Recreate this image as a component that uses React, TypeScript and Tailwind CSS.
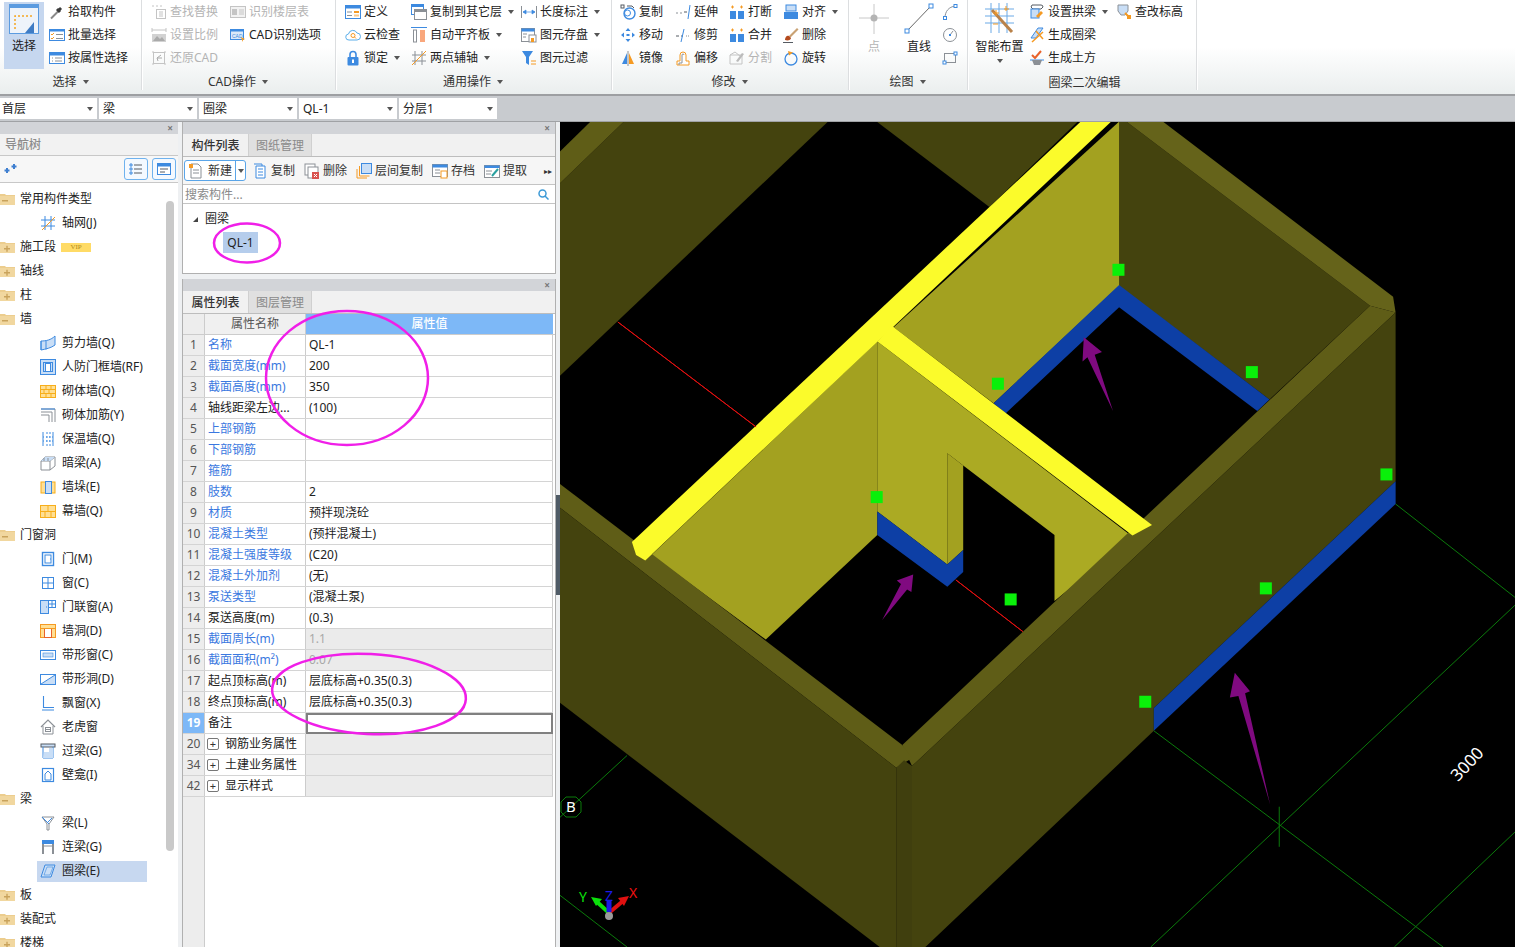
import React from 'react';

const B = '#3d8ae0', O = '#f59a23', G = '#8b9096', L = '#c9def6', D = '#555b62', LG = '#c4c4c4';

const Ic = ({ children, s = 16 }: { children: React.ReactNode; s?: number }) => (
  <svg width={s} height={s} viewBox="0 0 16 16" fill="none" className="shrink-0">{children}</svg>
);

const Caret = () => <span className="inline-block ml-[6px] w-0 h-0 border-x-[3px] border-x-transparent border-t-[4px] border-t-[#555]" />;

const icons: Record<string, React.ReactNode> = {
  pick: <><path d="M2 14.5 9 7.5" stroke="#8a8a8a" strokeWidth="2" /><path d="M8 5l3 3M10 4l2 2" stroke="#3a3a3a" strokeWidth="3" /></>,
  batch: <><rect x=".5" y="2.5" width="15" height="11" fill="#fff" stroke={B} /><rect x=".5" y="2.5" width="15" height="2" fill={B} /><path d="M2 7l1 1 2-2M2 11l1 1 2-2" stroke={O} /><path d="M7 7.5h7M7 11.5h7" stroke={G} /></>,
  attr: <><rect x=".5" y="2.5" width="15" height="11" fill="#fff" stroke={B} /><rect x=".5" y="2.5" width="15" height="3" fill={B} /><path d="M3 8h1M3 11h1M6 8h7M6 11h7" stroke={G} /></>,
  find: <><path d="M1 2h2M5 2h2M9 2h2" stroke={LG} /><rect x="5.5" y="5.5" width="9" height="9" stroke={LG} /><path d="M8 8h4M8 10h4M8 12h4" stroke={LG} /></>,
  floor: <><rect x=".5" y="2.5" width="15" height="11" stroke={LG} fill="#f2f2f2" /><rect x="2" y="5" width="5" height="6" fill={LG} /><path d="M9 6h5M9 8h5M9 10h5" stroke={LG} /></>,
  scale: <><path d="M1 3h14M1 1v4M15 1v4" stroke={LG} /><rect x="1" y="7" width="14" height="8" fill="#d2d2d2" /><path d="M2 14l4-5 3 3 2-2 3 4" fill="#aaa" /></>,
  cadopt: <><rect x=".5" y="2.5" width="13" height="10" fill="#dbe9f9" stroke={B} /><rect x=".5" y="2.5" width="13" height="2" fill={B} /><text x="2" y="10.5" fontSize="5" fill={B} fontFamily="Liberation Sans">CAD</text><path d="M11 10l4 2-2 1-.5 2z" fill={O} /></>,
  restore: <><rect x="2.5" y="2.5" width="11" height="11" stroke={LG} /><path d="M1 2h2M13 2h2M1 14h2M13 14h2" stroke={LG} /><path d="M10 5 6 8l1 3M6 8h5" stroke="#aaa" /></>,
  define: <><rect x=".5" y="1.5" width="15" height="13" fill="#fff" stroke={B} /><rect x=".5" y="1.5" width="15" height="3" fill={B} /><rect x="9" y="7" width="5" height="2" fill={O} /><rect x="9" y="10.5" width="5" height="2" fill="#f9c98a" /><path d="M2 8h5M2 11.5h5" stroke={G} /></>,
  cloud: <><path d="M4 13a3 3 0 0 1-.5-6 4.5 4.5 0 0 1 8.5-1 3.5 3.5 0 0 1 0 7z" stroke="#5aaeea" fill="#fff" /><circle cx="8" cy="8.5" r="2" stroke={O} /><path d="m9.5 10 1.5 1.5" stroke={O} /></>,
  lock: <><rect x="2.5" y="7" width="11" height="8.5" rx="1" fill={B} /><path d="M5 7V4.5a3 3 0 0 1 6 0V7" stroke={B} strokeWidth="1.6" /><rect x="7" y="9.5" width="2" height="3.5" fill="#fff" /></>,
  copyto: <><rect x=".5" y=".5" width="12" height="10" fill="#fff" stroke={B} /><rect x=".5" y=".5" width="12" height="2.5" fill={B} /><rect x="3.5" y="5.5" width="12" height="10" fill="#fff" stroke={G} /><rect x="3.5" y="5.5" width="12" height="2.5" fill={G} /></>,
  align: <><path d="M0 .5h16" stroke={B} /><rect x="2.5" y="3" width="3" height="12" fill="#fff" stroke={G} /><rect x="9" y="3" width="5" height="12" fill="#f9a77c" /></>,
  axis: <><path d="M4 1v14M11 1v14M1 5h14M1 11h14" stroke={G} /><path d="M1 15 15 1" stroke={O} /></>,
  len: <><path d="M.5 2v12M15.5 2v12" stroke={G} /><path d="M2 8h12M2 8l3-2v4zM14 8l-3-2v4z" stroke={B} fill={B} strokeWidth=".7" /></>,
  save: <><rect x=".5" y="1.5" width="13" height="13" fill="#fff" stroke={G} /><rect x=".5" y="1.5" width="13" height="3" fill={B} /><path d="M2 7h4M2 10h3" stroke={G} /><rect x="8" y="8" width="7" height="7" fill="#fff" stroke={G} /><rect x="10" y="11" width="3" height="4" fill={O} /></>,
  filter: <><path d="M1 1h11L8 7v8L5 13V7z" fill={B} /><path d="M10 11h5M10 14h5" stroke={O} /></>,
  copy: <><circle cx="9.5" cy="9.5" r="5.5" stroke={B} strokeWidth="1.4" /><circle cx="7.5" cy="9" r="3" stroke={B} /><rect x="1" y="1" width="3" height="3" stroke={D} /><path d="M7 2h5l2 2" stroke={D} /></>,
  move: <path d="M8 1 5.5 4h5zM8 15l-2.5-3h5zM1 8l3-2.5v5zM15 8l-3-2.5v5zM6.5 7h3v2h-3z" fill={B} />,
  mirror: <><path d="M8 1v15" stroke={G} /><path d="M7 3v11H2z" fill={B} /><path d="M9 3v11h5z" fill={O} /></>,
  extend: <><path d="M1 9h2M5 9h2" stroke={G} /><path d="M9 8h3" stroke={D} /><path d="M15 1l-2 14" stroke={B} /></>,
  trim: <><path d="M1 9h3M6 9h2" stroke={D} /><path d="M11 9h4" stroke={G} strokeDasharray="1 1" /><path d="M9 2 6 15" stroke={B} /></>,
  offset: <><path d="M2 15v-4h3V5a3 3 0 0 1 6 0v6h3v4z" fill="#fff" stroke={O} /><path d="M4 15v-2h3V5a1 1 0 0 1 2 0" stroke={G} /></>,
  brk: <><rect x="1" y="7" width="6" height="8" fill={B} /><rect x="9" y="7" width="6" height="8" fill={B} /><path d="M2 3h3M3.5 1.5v3M11 3h3M12.5 1.5v3" stroke={O} /></>,
  split: <><path d="M1 14h12L13 5 1 5z" stroke={LG} /><path d="M1 5l5-3 5 4" stroke={LG} /><path d="m7 11 6-8 2 1-6 8z" fill="#bbb" /></>,
  alignb: <><rect x="3" y="1" width="10" height="6" fill={L} stroke={B} /><rect x="1" y="8" width="14" height="7" fill={B} /></>,
  del: <><path d="m6 9 8-8 1.5 1.5-8 8z" fill="#c9a274" /><path d="M2 13c0-3 2-5 4-4l2 2c0 2-3 3-6 2z" fill="#b44a1e" /><path d="M0 15.5h10" stroke={D} /></>,
  rotate: <><circle cx="8" cy="9" r="6" stroke={B} strokeWidth="1.3" /><path d="M5 1l5 1.5-4 3z" fill={O} /></>,
  arc: <><path d="M3 14C3 7 7 3 13 2" stroke={G} /><rect x="1.5" y="12.5" width="3" height="3" fill="#fff" stroke={B} /><rect x="12" y=".5" width="3" height="3" fill="#fff" stroke={B} /></>,
  circ: <><circle cx="8" cy="8" r="6.5" stroke={G} /><path d="M8 8l3-4" stroke={G} /><rect x="7" y="7" width="2" height="2" fill={B} /></>,
  rc: <><rect x="2.5" y="3.5" width="11" height="9" stroke={G} /><rect x="1" y="11" width="3" height="3" fill="#fff" stroke={B} /><rect x="12" y="2" width="3" height="3" fill="#fff" stroke={B} /></>,
  arch: <><path d="M3 1h9a2 2 0 0 1 2 2L12 5H4L2 3z" fill="#fff" stroke={D} /><rect x="2" y="5" width="8" height="9" fill={L} stroke={B} /><path d="m7 12 5-5 2 2-5 5z" fill={O} /></>,
  ring: <><path d="M2 11 9 1h5l-7 10z" fill={L} stroke={B} /><path d="M3 15 14 5M7 4l7 8" stroke={O} strokeWidth="1.5" /></>,
  earth: <><path d="m3 5 3 3 6-7" stroke="#e8622a" strokeWidth="2" /><path d="M1 10h14" stroke={B} /><path d="M3 10h10l-2 5H5z" fill={G} /></>,
  check: <><path d="M2 1h10v6l-3 4H5L2 7z" fill={L} stroke={G} /><path d="m9 9 5 5" stroke={O} strokeWidth="2" /><rect x="11" y="11" width="4" height="4" fill={O} /></>,
  nw: <><path d="M3 1h7l3 3v11H3z" fill="#fff" stroke={G} /><path d="M1 1h4v4H1z" fill={O} /><path d="M5 7h6M5 10h6" stroke={G} /></>,
  cp: <><path d="M4 3h9v12H4z" fill="#fff" stroke={B} /><path d="M2 1h8v2M6 6h5M6 9h5M6 12h5" stroke={B} /></>,
  dl: <><rect x="1" y="1" width="10" height="11" fill="#fff" stroke={G} /><rect x="4" y="4" width="10" height="11" fill="#fff" stroke={G} /><rect x="8" y="9" width="7" height="7" fill="#d9534f" /><path d="m10 11 3 3m0-3-3 3" stroke="#fff" /></>,
  fl: <><rect x="5.5" y=".5" width="10" height="10" fill={L} stroke={B} /><path d="M3.5 3v10h10M1 6v9h10" stroke={O} /></>,
  ar: <><rect x=".5" y="1.5" width="15" height="12" fill="#fff" stroke={G} /><rect x=".5" y="1.5" width="15" height="3" fill={B} /><path d="M3 7h5M3 10h5" stroke={G} /><rect x="9" y="8" width="6" height="7" fill="#fff" stroke={O} /></>,
  ex: <><rect x=".5" y="2.5" width="15" height="12" fill="#fff" stroke={G} /><rect x=".5" y="2.5" width="15" height="2.5" fill={B} /><path d="M2 8h6M2 11h5" stroke={G} /><path d="m8 13 6-7" stroke="#2aa0a0" strokeWidth="2" /></>,
  grid: <><path d="M5 1v14M11 1v14M1 5h14M1 11h14" stroke={B} /><path d="M2 15 15 2" stroke={O} /></>,
  shear: <><path d="M1 6c5 0 10-1 14-5v9c-4 3-9 4-14 5z" fill={L} stroke={B} /><path d="M1 6v9M6 5.500v9" stroke={B} /></>,
  rf: <><rect x=".5" y=".5" width="15" height="15" fill={L} stroke={B} /><rect x="3.500" y="3.500" width="9" height="9" stroke={B} /><rect x="5.500" y="4.500" width="5" height="8" fill="#fff" stroke={B} /></>,
  brick: <><rect x=".5" y="2.500" width="15" height="12" fill="#ffdf94" stroke="#f7ae1a" /><path d="M1 6.500h14M1 10.500h14M6 3v3M11 3v3M4 7v4M9 7v4M6 11v3M11 11v3" stroke="#f7ae1a" /></>,
  reinf: <><path d="M1 2h14v13M1 5h11v10M1 8h8v7" stroke={G} /><path d="M1 2h14" stroke={B} /></>,
  ins: <><path d="M3 1v14M13 1v14" stroke={B} /><path d="M7 1v14M10 1v14" stroke={B} strokeDasharray="2 2" /><path d="M3 6h10M3 10h10" stroke={B} strokeDasharray="1 2" /></>,
  hidden: <><path d="M1 6h9v9H1zM1 6l4-4h10L10 6M15 2v9l-5 4" stroke={G} /><path d="M5 2 1 6h9l5-4z" fill={L} /><path d="M4 3v3M8 3v3" stroke={G} /></>,
  pier: <><rect x="1" y="3" width="14" height="11" fill="#ffdf94" stroke="#f7ae1a" /><rect x="5.500" y="2.500" width="6" height="12" fill={L} stroke={B} /></>,
  curtain: <><rect x=".5" y="2.500" width="15" height="12" fill="#ffdf94" stroke="#f7ae1a" /><path d="M1 8.500h14M8 3v5M5 9v5M11 9v5" stroke="#f7ae1a" /></>,
  door: <><rect x="2.500" y="1.500" width="11" height="13" fill="#fff" stroke={B} strokeWidth="1.400" /><rect x="5" y="4" width="6" height="8" stroke={B} /><path d="M10 8h1" stroke={B} /></>,
  win: <><rect x="2.500" y="2.500" width="11" height="11" fill="#fff" stroke={B} /><path d="M8 3v10M3 8h10" stroke={B} /></>,
  dw: <><rect x=".5" y="1.500" width="8" height="13" fill={L} stroke={B} /><rect x="8.500" y="1.500" width="7" height="7" fill="#fff" stroke={B} /><path d="M12 2v6M9 5h6M6 8h1" stroke={B} /></>,
  hole: <><rect x=".5" y="1.500" width="15" height="13" fill="#ffdf94" stroke={O} /><rect x="4.500" y="5.500" width="7" height="9" fill="#fff" stroke="#e8622a" /><path d="M1 5.500h14" stroke={O} /></>,
  strip: <><rect x=".5" y="3.500" width="15" height="9" fill="#fff" stroke={B} /><rect x="3" y="6" width="10" height="4" fill={L} stroke={B} strokeWidth=".6" /></>,
  striph: <><rect x=".5" y="3.500" width="15" height="10" fill="#fff" stroke={B} /><path d="M1 13 15 4v9z" fill={L} /><path d="M1 13 15 4" stroke={B} /></>,
  bay: <path d="M3.500 1v11.500H14M2 15h12" stroke={B} strokeWidth="1.100" />,
  dormer: <><path d="M1 8 8 1l7 7" stroke={G} strokeWidth="1.200" /><path d="M3 7v8h10V7" stroke={G} /><rect x="5.500" y="8.500" width="5" height="4" stroke={G} /><path d="M6 10.500h4" stroke={G} /></>,
  lintel: <><rect x="1" y="1" width="14" height="3" fill={L} stroke={D} /><path d="M3 4v11h10V4" stroke={B} /><path d="M3 15 4 9h5V5h4v10z" fill={L} /></>,
  niche: <><rect x="2.500" y="1.500" width="11" height="13" fill="#fff" stroke={B} strokeWidth="1.200" /><path d="M5 13V7l3-3 3 3v6z" stroke={B} /></>,
  beam: <><path d="M2 2h12L9 9v6H7V9z" fill="#fff" stroke={G} /><path d="m2 2 7 7M7 8l5-5" stroke={B} /></>,
  link: <><rect x="2" y="1" width="12" height="4" fill={B} /><path d="M3 5v10M13 5v10" stroke={G} strokeWidth="2" /><path d="M2 7h12" stroke={G} /></>,
  quan: <><path d="M1 14 5 2h10l-4 12z" fill={L} stroke={B} /><path d="M4 12 7 4h6l-3 8z" stroke={B} strokeWidth=".6" /></>,
};

function Tool({ i, t, caret, off, w }: { i: string; t: string; caret?: boolean; off?: boolean; w: string }) {
  return (
    <div className={`h-[23px] flex items-center ${w}`}>
      <Ic>{icons[i]}</Ic>
      <span className={`ml-[3px] text-[12px] leading-[16px] whitespace-nowrap ${off ? 'text-[#b4b4b4]' : 'text-[#222]'}`}>{t}</span>
      {caret && <Caret />}
    </div>
  );
}

function Group({ w, label, caret = true, pl, lp = '', children }: { w: string; label: string; caret?: boolean; pl: string; lp?: string; children: React.ReactNode }) {
  return (
    <div className={`${w} h-[94px] shrink-0 flex flex-col relative`}>
      <div className={`h-[71px] flex ${pl}`}>{children}</div>
      <div className={`h-[21px] flex items-center justify-center text-[12px] text-[#333] ${lp}`}>
        {label}{caret && <Caret />}
      </div>
      <div className="absolute right-[-2px] top-0 h-[90px] w-[2px] bg-[#dcdee0] border-r border-white" />
    </div>
  );
}

function Ribbon() {
  return (
    <div className="h-[94px] flex bg-gradient-to-b from-white from-50% to-[#eaeeee]">
      <Group w="w-[141px]" label="选择" pl="pl-[4px]">
        <div className="w-[40px] h-[67px] mt-[2px] bg-[#c6d7ef] flex flex-col items-center shrink-0">
          <svg width="30" height="30" viewBox="0 0 30 30" fill="none" className="mt-[2px]">
            <rect x=".5" y=".5" width="29" height="29" fill="#eef3fa" stroke="#5b9be0" />
            <rect x="0" y="0" width="30" height="4" fill="#5b9be0" />
            <path d="M6 25V12h18" stroke="#f5a623" strokeWidth="1.500" strokeDasharray="2 2" />
            <path d="M25 18v11H16z" fill="#3f7cc4" />
          </svg>
          <span className="text-[12px] leading-[16px] mt-[4px] text-[#222]">选择</span>
        </div>
        <div className="ml-[5px] flex flex-col">
          <Tool i="pick" t="拾取构件" w="w-[90px]" />
          <Tool i="batch" t="批量选择" w="w-[90px]" />
          <Tool i="attr" t="按属性选择" w="w-[90px]" />
        </div>
      </Group>
      <Group w="w-[194px]" label="CAD操作" pl="pl-[10px]">
        <div className="w-[79px] flex flex-col">
          <Tool i="find" t="查找替换" off w="w-[79px]" />
          <Tool i="scale" t="设置比例" off w="w-[79px]" />
          <Tool i="restore" t="还原CAD" off w="w-[79px]" />
        </div>
        <div className="flex flex-col">
          <Tool i="floor" t="识别楼层表" off w="w-[100px]" />
          <Tool i="cadopt" t="CAD识别选项" w="w-[100px]" />
        </div>
      </Group>
      <Group w="w-[276px]" label="通用操作" pl="pl-[10px]">
        <div className="w-[66px] flex flex-col">
          <Tool i="define" t="定义" w="w-[66px]" />
          <Tool i="cloud" t="云检查" w="w-[66px]" />
          <Tool i="lock" t="锁定" caret w="w-[66px]" />
        </div>
        <div className="w-[110px] flex flex-col">
          <Tool i="copyto" t="复制到其它层" caret w="w-[110px]" />
          <Tool i="align" t="自动平齐板" caret w="w-[110px]" />
          <Tool i="axis" t="两点辅轴" caret w="w-[110px]" />
        </div>
        <div className="flex flex-col">
          <Tool i="len" t="长度标注" caret w="w-[88px]" />
          <Tool i="save" t="图元存盘" caret w="w-[88px]" />
          <Tool i="filter" t="图元过滤" w="w-[88px]" />
        </div>
      </Group>
      <Group w="w-[237px]" label="修改" pl="pl-[9px]">
        <div className="w-[55px] flex flex-col">
          <Tool i="copy" t="复制" w="w-[55px]" />
          <Tool i="move" t="移动" w="w-[55px]" />
          <Tool i="mirror" t="镜像" w="w-[55px]" />
        </div>
        <div className="w-[54px] flex flex-col">
          <Tool i="extend" t="延伸" w="w-[54px]" />
          <Tool i="trim" t="修剪" w="w-[54px]" />
          <Tool i="offset" t="偏移" w="w-[54px]" />
        </div>
        <div className="w-[54px] flex flex-col">
          <Tool i="brk" t="打断" w="w-[54px]" />
          <Tool i="brk" t="合并" w="w-[54px]" />
          <Tool i="split" t="分割" off w="w-[54px]" />
        </div>
        <div className="flex flex-col">
          <Tool i="alignb" t="对齐" caret w="w-[60px]" />
          <Tool i="del" t="删除" w="w-[60px]" />
          <Tool i="rotate" t="旋转" w="w-[60px]" />
        </div>
      </Group>
      <Group w="w-[119px]" label="绘图" pl="pl-[11px]">
        <div className="w-[30px] flex flex-col items-center">
          <svg width="30" height="32" viewBox="0 0 30 32" className="mt-[2px]">
            <path d="M15 2v30M0 16h30" stroke="#c8c8c8" />
            <circle cx="15" cy="16" r="3.500" fill="#b4b4b4" />
          </svg>
          <span className="text-[12px] leading-[16px] mt-[5px] text-[#b4b4b4]">点</span>
        </div>
        <div className="ml-[12px] w-[36px] flex flex-col items-center">
          <svg width="30" height="32" viewBox="0 0 30 32" fill="none" className="mt-[2px]">
            <path d="M3 29 27 4" stroke="#666" />
            <rect x="1" y="27" width="4" height="4" fill="#fff" stroke={B} />
            <rect x="25" y="2" width="4" height="4" fill="#fff" stroke={B} />
          </svg>
          <span className="text-[12px] leading-[16px] mt-[5px] text-[#222]">直线</span>
        </div>
        <div className="ml-[5px] flex flex-col">
          <div className="h-[23px] flex items-center"><Ic>{icons.arc}</Ic></div>
          <div className="h-[23px] flex items-center"><Ic>{icons.circ}</Ic></div>
          <div className="h-[23px] flex items-center"><Ic>{icons.rc}</Ic></div>
        </div>
      </Group>
      <Group w="w-[229px]" label="圈梁二次编辑" caret={false} pl="pl-[8px]" lp="pl-[6px] pt-[3px]">
        <div className="w-[49px] flex flex-col items-center shrink-0">
          <svg width="32" height="34" viewBox="0 0 32 34" fill="none">
            <path d="M7 3v30M15 3v30M23 3v30M1 9h29M1 16h29M1 23h29" stroke="#6aa9e6" />
            <path d="M8 10l20 22" stroke="#b9824a" strokeWidth="3" />
            <path d="M9 13h6M12 10v6M20 9h5M22 6v5M9 24h5" stroke={O} />
          </svg>
          <span className="text-[12px] leading-[16px] mt-[5px] whitespace-nowrap text-[#222]">智能布置</span>
          <span className="mt-[4px] w-0 h-0 border-x-[3px] border-x-transparent border-t-[4px] border-t-[#555]" />
        </div>
        <div className="ml-[5px] w-[87px] flex flex-col">
          <Tool i="arch" t="设置拱梁" caret w="w-[87px]" />
          <Tool i="ring" t="生成圈梁" w="w-[87px]" />
          <Tool i="earth" t="生成土方" w="w-[87px]" />
        </div>
        <div className="flex flex-col">
          <Tool i="check" t="查改标高" w="w-[70px]" />
        </div>
      </Group>
    </div>
  );
}

const selects = ['首层', '梁', '圈梁', 'QL-1', '分层1'];

function Selects() {
  return (
    <div className="h-[27px] bg-[#c8cbcf] border-t-2 border-[#9d9fa2] flex items-start gap-[2px] pt-[2px]">
      {selects.map((s, i) => (
        <div key={s} className={`h-[21px] bg-white flex items-center justify-between pr-[4px] text-[12px] text-[#222] ${i === 0 ? 'w-[97px] pl-[2px]' : 'w-[98px] pl-[4px]'}`}>
          <span>{s}</span>
          <span className="w-0 h-0 border-x-[3px] border-x-transparent border-t-[4px] border-t-[#555]" />
        </div>
      ))}
    </div>
  );
}

const Title = () => (
  <div className="h-[12px] bg-[#d2d4d8] flex items-center justify-end pr-[5px] text-[10px] leading-[10px] text-[#777] font-bold shrink-0">×</div>
);

type TreeItem = [string, string];
const tree: TreeItem[] = [
  ['-', '常用构件类型'], ['grid', '轴网(J)'], ['+', '施工段'], ['+', '轴线'], ['+', '柱'], ['-', '墙'],
  ['shear', '剪力墙(Q)'], ['rf', '人防门框墙(RF)'], ['brick', '砌体墙(Q)'], ['reinf', '砌体加筋(Y)'], ['ins', '保温墙(Q)'],
  ['hidden', '暗梁(A)'], ['pier', '墙垛(E)'], ['curtain', '幕墙(Q)'], ['-', '门窗洞'], ['door', '门(M)'], ['win', '窗(C)'],
  ['dw', '门联窗(A)'], ['hole', '墙洞(D)'], ['strip', '带形窗(C)'], ['striph', '带形洞(D)'], ['bay', '飘窗(X)'],
  ['dormer', '老虎窗'], ['lintel', '过梁(G)'], ['niche', '壁龛(I)'], ['-', '梁'], ['beam', '梁(L)'], ['link', '连梁(G)'],
  ['quan', '圈梁(E)'], ['+', '板'], ['+', '装配式'], ['+', '楼梯'],
];

function Folder({ open }: { open: boolean }) {
  return (
    <svg width="15" height="14" viewBox="0 0 15 14" className="shrink-0">
      <path d="M0 3V2h5l1 1h9v10H0z" fill="#eccd8e" />
      <path d="M0 4h15v9H0z" fill="#f1d79f" />
      <path d={open ? 'M2 8h6v1.500H2z' : 'M4 8h6v1.500H4zM6.300 5.800h1.400v6H6.300z'} fill="#c9a35c" />
    </svg>
  );
}

function Nav() {
  return (
    <div className="w-[178px] h-full bg-white flex flex-col shrink-0 relative overflow-hidden">
      <Title />
      <div className="h-[22px] bg-[#f2f2f2] flex items-center pl-[5px] pt-px text-[12px] text-[#8c8c8c] font-medium border-b border-[#c8c8c8] shrink-0">导航树</div>
      <div className="h-[27px] bg-[#f7f7f7] border-b border-[#c8c8c8] flex items-center justify-between pl-[4px] pr-[2px] shrink-0">
        <svg width="14" height="12" viewBox="0 0 14 12"><path d="M3 5v5M.5 7.500h5M10 1v5M7.500 3.500h5" stroke="#3f7fd0" strokeWidth="2" /></svg>
        <div className="flex gap-[4px]">
          <div className="w-[24px] h-[22px] border border-[#6fb2ee] rounded-[3px] bg-[#f4f9ff] flex items-center justify-center">
            <Ic><path d="M2 3h2v2H2zM2 7h2v2H2zM2 11h2v2H2z" stroke={B} /><path d="M6 4h8M6 8h8M6 12h8" stroke={D} /></Ic>
          </div>
          <div className="w-[24px] h-[22px] border border-[#6fb2ee] rounded-[3px] bg-[#f4f9ff] flex items-center justify-center">
            <Ic><rect x="1.500" y="2.500" width="13" height="11" fill="#fff" stroke={B} /><rect x="1.500" y="2.500" width="13" height="3" fill={B} /><path d="M4 8h8M4 11h5" stroke={D} /></Ic>
          </div>
        </div>
      </div>
      <div className="pt-[4px] flex flex-col">
        {tree.map(([k, t]) => {
          const isFolder = k === '+' || k === '-';
          const sel = t === '圈梁(E)';
          return (
            <div key={t} className="h-[24px] flex items-center text-[12px] text-[#222] whitespace-nowrap shrink-0">
              {isFolder ? (
                <>
                  <Folder open={k === '-'} />
                  <span className="ml-[5px]">{t}</span>
                  {t === '施工段' && <span className="ml-[5px] w-[30px] h-[9px] bg-[#ffdb66] text-[#b08a1e] text-[7px] leading-[9px] text-center font-['Liberation_Serif']">VIP</span>}
                </>
              ) : (
                <div className={`ml-[37px] w-[110px] h-[21px] pl-[3px] flex items-center ${sel ? 'bg-[#c7d8f0]' : ''}`}>
                  <Ic>{icons[k]}</Ic>
                  <span className="ml-[6px]">{t}</span>
                </div>
              )}
            </div>
          );
        })}
      </div>
      <div className="absolute left-[166px] top-[79px] w-[8px] h-[650px] rounded-[4px] bg-[#c9c9c9]" />
    </div>
  );
}

function Tabs({ a, b }: { a: string; b: string }) {
  return (
    <div className="h-[23px] bg-[#f1f1f1] flex border-b border-[#bdbdbd] shrink-0 text-[12px]">
      <div className="w-[65px] flex items-center justify-center pt-px font-medium text-[#333] bg-[#f1f1f1]">{a}</div>
      <div className="w-[64px] flex items-center justify-center pt-px text-[#8a8a8a] bg-[#e0e0e0] border-x border-[#d0d0d0]">{b}</div>
    </div>
  );
}

function TB({ i, t, w }: { i: string; t: string; w: string }) {
  return (
    <div className={`flex items-center ${w} shrink-0`}>
      <Ic>{icons[i]}</Ic>
      <span className="ml-[3px] text-[12px] text-[#333] whitespace-nowrap">{t}</span>
    </div>
  );
}

type Row = { n: number; k: string; v?: string; link?: boolean; gray?: boolean; sel?: boolean; plus?: boolean };
const rows: Row[] = [
  { n: 1, k: '名称', v: 'QL-1', link: true }, { n: 2, k: '截面宽度(mm)', v: '200', link: true }, { n: 3, k: '截面高度(mm)', v: '350', link: true },
  { n: 4, k: '轴线距梁左边...', v: '(100)' }, { n: 5, k: '上部钢筋', link: true }, { n: 6, k: '下部钢筋', link: true }, { n: 7, k: '箍筋', link: true },
  { n: 8, k: '肢数', v: '2', link: true }, { n: 9, k: '材质', v: '预拌现浇砼', link: true }, { n: 10, k: '混凝土类型', v: '(预拌混凝土)', link: true },
  { n: 11, k: '混凝土强度等级', v: '(C20)', link: true }, { n: 12, k: '混凝土外加剂', v: '(无)', link: true }, { n: 13, k: '泵送类型', v: '(混凝土泵)', link: true },
  { n: 14, k: '泵送高度(m)', v: '(0.3)' }, { n: 15, k: '截面周长(m)', v: '1.1', link: true, gray: true }, { n: 16, k: '截面面积(m²)', v: '0.07', link: true, gray: true },
  { n: 17, k: '起点顶标高(m)', v: '层底标高+0.35(0.3)' }, { n: 18, k: '终点顶标高(m)', v: '层底标高+0.35(0.3)' }, { n: 19, k: '备注', sel: true },
  { n: 20, k: '钢筋业务属性', plus: true, gray: true }, { n: 34, k: '土建业务属性', plus: true, gray: true }, { n: 42, k: '显示样式', plus: true, gray: true },
];

function Table() {
  return (
    <div className="flex-1 flex flex-col text-[12px] bg-white relative min-h-0">
      <div className="h-[21px] flex shrink-0 border-b border-[#ccc]">
        <div className="w-[22px] bg-[#ededed] border-r border-[#ccc]" />
        <div className="w-[101px] bg-[#f0f0f0] border-r border-[#ccc] flex items-center justify-center text-[#555]">属性名称</div>
        <div className="w-[247px] bg-[#7db8f7] flex items-center justify-center text-white font-medium">属性值</div>
      </div>
      {rows.map(r => (
        <div key={r.n} className="h-[21px] flex shrink-0 border-b border-[#d4d4d4] w-[370px]">
          <div className={`w-[22px] border-r border-[#ccc] flex items-center justify-center ${r.sel ? 'bg-[#7db8f7] text-white font-bold' : 'bg-[#ededed] text-[#555]'}`}>{r.n}</div>
          <div className={`w-[101px] border-r border-[#ccc] flex items-center pl-[3px] whitespace-nowrap overflow-hidden ${r.link ? 'text-[#3a78e0]' : 'text-[#222]'}`}>
            {r.plus && <span className="w-[12px] h-[12px] border border-[#777] rounded-[2px] flex items-center justify-center text-[11px] leading-[10px] mr-[6px] ml-[-1px] text-[#333]">+</span>}
            {r.k}
          </div>
          <div className={`w-[247px] flex items-center pl-[3px] ${r.sel ? 'border-2 border-[#808080] h-[21px]' : 'border-r border-[#ccc]'} ${r.gray ? 'bg-[#ebebeb] text-[#a8a8a8]' : 'text-[#222]'}`}>{r.v}</div>
        </div>
      ))}
      <div className="absolute left-0 top-[483px] bottom-0 w-[22px] bg-[#ededed] border-r border-[#ccc]" />
    </div>
  );
}

function Middle() {
  return (
    <div className="w-[374px] ml-[4px] h-full flex flex-col shrink-0">
      <div className="h-[152px] flex flex-col border-x border-b border-[#b0b0b0] shrink-0">
        <Title />
        <Tabs a="构件列表" b="图纸管理" />
        <div className="h-[28px] bg-[#f6f6f6] border-b border-[#c4c4c4] flex items-center pl-[1px] shrink-0">
          <div className="w-[62px] h-[21px] bg-white border border-[#5aa5e8] rounded-[3px] flex items-center pl-[3px] text-[12px] text-[#333] shrink-0">
            <Ic>{icons.nw}</Ic>
            <span className="ml-[4px]">新建</span>
            <span className="ml-[3px] h-full border-l border-[#5aa5e8] pl-[2px] flex items-center"><span className="w-0 h-0 border-x-[3px] border-x-transparent border-t-[4px] border-t-[#555]" /></span>
          </div>
          <div className="ml-[6px] flex">
            <TB i="cp" t="复制" w="w-[52px]" />
            <TB i="dl" t="删除" w="w-[52px]" />
            <TB i="fl" t="层间复制" w="w-[76px]" />
            <TB i="ar" t="存档" w="w-[52px]" />
            <TB i="ex" t="提取" w="w-[60px]" />
          </div>
          <span className="text-[8px] text-[#333]">▸▸</span>
        </div>
        <div className="h-[19px] bg-white border-b border-[#c4c4c4] flex items-center justify-between pl-[2px] pr-[6px] pt-px text-[12px] text-[#8a8a8a] shrink-0">
          <span>搜索构件...</span>
          <svg width="11" height="11" viewBox="0 0 11 11" fill="none"><circle cx="4.500" cy="4.500" r="3.500" stroke="#3d9ad6" strokeWidth="1.500" /><path d="m7 7 3.500 3.500" stroke="#3d9ad6" strokeWidth="1.500" /></svg>
        </div>
        <div className="flex-1 bg-white text-[12px] text-[#222] pl-[10px] pt-[6px]">
          <div className="h-[18px] flex items-center">
            <span className="w-0 h-0 border-l-[5px] border-l-transparent border-b-[5px] border-b-[#444]" />
            <span className="ml-[7px]">圈梁</span>
          </div>
          <div className="ml-[30px] mt-[4px] w-[35px] h-[21px] bg-[#b5cdec] flex items-center justify-center">QL-1</div>
        </div>
      </div>
      <div className="mt-[5px] flex-1 flex flex-col border-x border-[#b0b0b0] min-h-0">
        <Title />
        <Tabs a="属性列表" b="图层管理" />
        <Table />
      </div>
    </div>
  );
}

const m = (pts: number[][]) => pts.map(([x, y]) => `${(x / 1.642).toFixed(1)},${(y / 1.896 - 2).toFixed(1)}`).join(' ');
const px = (x: number) => x / 1.642;
const py = (y: number) => y / 1.896 - 2;

const polys: [string, number[][]][] = [
  ['#44430e', [[0, 120], [105, 3], [440, 3], [0, 485]]],
  ['#5f5d17', [[0, 60], [50, 3], [105, 3], [0, 120]]],
  ['#44430e', [[520, 3], [850, 3], [705, 165]]],
  ['#44430e', [[918, 3], [930, 3], [1330, 352], [1165, 530], [918, 315]]],
  ['#65631a', [[930, 3], [990, 3], [1368, 335], [1372, 365], [1330, 352]]],
  ['#a3a120', [[548, 393], [918, 3], [918, 315], [712, 537]]],
  ['#a3a120', [[150, 825], [521, 420], [521, 787], [338, 985]]],
  ['#abaa23', [[521, 420], [940, 790], [812, 912], [812, 787], [662, 655], [636, 632], [636, 843], [521, 742]]],
  ['#a3a120', [[636, 632], [662, 655], [662, 815], [636, 843]]],
  ['#0d3fa5', [[521, 742], [636, 843], [662, 815], [662, 857], [636, 885], [521, 787]]],
  ['#0d3fa5', [[712, 537], [918, 313], [1165, 530], [1145, 552], [918, 355], [732, 556]]],
  ['#5f5d17', [[1330, 352], [1372, 365], [578, 1225], [562, 1185]]],
  ['#5f5d17', [[0, 690], [562, 1185], [578, 1210], [552, 1228], [0, 735]]],
  ['#44430e', [[0, 735], [552, 1228], [552, 1568], [525, 1568], [0, 1105]]],
  ['#403f0e', [[552, 1228], [565, 1214], [578, 1225], [578, 1568], [552, 1568]]],
  ['#44430e', [[578, 1225], [1372, 365], [1372, 685], [975, 1115], [975, 1158], [600, 1568], [578, 1568]]],
  ['#0d3fa5', [[975, 1115], [1372, 685], [1372, 728], [975, 1158]]],
  ['#fbfb2b', [[118, 800], [855, 3], [905, 3], [140, 835], [125, 825]]],
  ['#fbfb2b', [[545, 390], [972, 768], [940, 788], [521, 420]]],
  ['#800a80', [[908, 552], [866, 450], [858, 458], [860, 412], [890, 440], [878, 445]]],
  ['#800a80', [[529, 948], [560, 880], [553, 873], [580, 862], [577, 895], [570, 890]]],
  ['#800a80', [[1166, 1298], [1114, 1092], [1100, 1095], [1108, 1048], [1133, 1083], [1125, 1087]]],
];

const lines: [string, number[]][] = [
  ['#e01010', [95, 383, 322, 582]], ['#e01010', [650, 872, 760, 970]],
  ['#0b7a0b', [1372, 728, 1568, 905]], ['#0b7a0b', [975, 1158, 1450, 1568]], ['#0b7a0b', [1568, 920, 970, 1568]],
  ['#0b7a0b', [1568, 1350, 1370, 1568]], ['#0b7a0b', [110, 1205, 0, 1322]], ['#0b7a0b', [0, 1470, 110, 1568]],
];

const dots = [[917, 284], [719, 500], [1136, 478], [520, 715], [740, 909], [1357, 672], [1159, 888], [961, 1103]];

function Scene() {
  return (
    <div className="flex-1 h-full bg-black overflow-hidden">
      <svg width="955" height="825" viewBox="0 0 955 825" className="block">
        {lines.map(([c, l], i) => (
          <line key={i} x1={px(l[0])} y1={py(l[1])} x2={px(l[2])} y2={py(l[3])} stroke={c} strokeWidth="1" />
        ))}
        {polys.map(([c, p], i) => <polygon key={i} points={m(p)} fill={c} />)}
        <line x1={px(95)} y1={py(383)} x2={px(322)} y2={py(582)} stroke="#e01010" />
        <line x1={px(650)} y1={py(872)} x2={px(760)} y2={py(970)} stroke="#e01010" />
        <line x1={px(1181)} y1={py(1302)} x2={px(1181)} y2={py(1378)} stroke="#0b7a0b" />
        {dots.map(([x, y], i) => <rect key={i} x={px(x) - 6} y={py(y) - 6} width="12" height="12" fill="#0af00a" />)}
        <polygon points="6,675 16,675 21,680 21,690 16,695 6,695 1,690 1,680" fill="none" stroke="#0b7a0b" />
        <text x="11" y="690" textAnchor="middle" fontSize="15" fill="#fff" fontFamily="Noto Sans">B</text>
        <text x="907" y="648" textAnchor="middle" fontSize="17" fill="#fff" fontFamily="Noto Sans" transform="rotate(-47 907 642)">3000</text>
        <g transform="translate(49,788)" fontFamily="Noto Sans" fontSize="14">
          <text x="-30" y="-8" fill="#0be00b">Y</text>
          <text x="-4" y="-9" fill="#1a1ae8">Z</text>
          <text x="20" y="-12" fill="#f01010">X</text>
          <path d="M-1 2-13-9" stroke="#0be00b" strokeWidth="4" />
          <path d="M-18-13-7-11-13-4z" fill="#0be00b" />
          <path d="M1 2 14-9" stroke="#e01010" strokeWidth="4" />
          <path d="M20-14 9-12 15-4z" fill="#e01010" />
          <path d="M0 2V-10" stroke="#1a1ae8" strokeWidth="5" />
          <circle cx="0" cy="6" r="4" fill="#9a9a9a" />
        </g>
      </svg>
    </div>
  );
}

export default function App() {
  return (
    <div className="w-[1515px] h-[947px] overflow-hidden relative bg-[#eef0f2] flex flex-col font-['Noto_Sans','Noto_Sans_CJK_SC',sans-serif]">
      <Ribbon />
      <Selects />
      <div className="h-[826px] flex border-t border-[#a0a2a5] min-h-0">
        <Nav />
        <Middle />
        <div className="w-[4px] h-full relative shrink-0 bg-[#eef0f2]">
          <div className="absolute left-0 top-[373px] w-[4px] h-[100px] bg-[#4f5b66]" />
        </div>
        <Scene />
      </div>
      <svg width="1515" height="947" viewBox="0 0 1515 947" fill="none" className="absolute inset-0 pointer-events-none">
        <ellipse cx="247" cy="243" rx="33" ry="19.500" stroke="#f01fe8" strokeWidth="2.500" />
        <ellipse cx="347" cy="378" rx="81" ry="67" stroke="#f01fe8" strokeWidth="2.500" />
        <ellipse cx="369" cy="694" rx="97" ry="40" stroke="#f01fe8" strokeWidth="2.500" transform="rotate(3 369 694)" />
      </svg>
    </div>
  );
}
